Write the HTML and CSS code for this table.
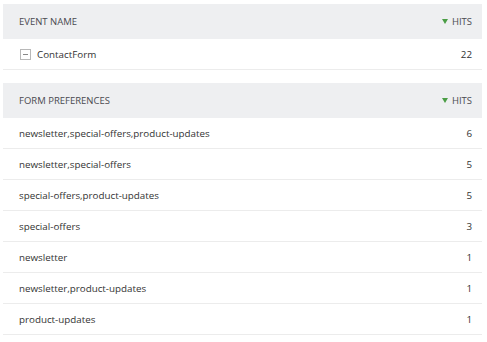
FILE: index.html
```html
<!DOCTYPE html>
<html lang="en">
<head>
  <meta charset="UTF-8">
  <title>Form preferences</title>
  <link rel="stylesheet" href="styles.css">
</head>
<body>
  <table class="report">
    <thead>
      <tr>
        <th class="label">Event name</th>
        <th class="hits"><span class="sort-arrow"></span>Hits</th>
      </tr>
    </thead>
    <tbody>
      <tr>
        <td class="label"><span class="toggle"></span>ContactForm</td>
        <td class="hits">22</td>
      </tr>
    </tbody>
  </table>

  <table class="report">
    <thead>
      <tr>
        <th class="label">Form preferences</th>
        <th class="hits"><span class="sort-arrow"></span>Hits</th>
      </tr>
    </thead>
    <tbody>
      <tr><td class="label">newsletter,special-offers,product-updates</td><td class="hits">6</td></tr>
      <tr><td class="label">newsletter,special-offers</td><td class="hits">5</td></tr>
      <tr><td class="label">special-offers,product-updates</td><td class="hits">5</td></tr>
      <tr><td class="label">special-offers</td><td class="hits">3</td></tr>
      <tr><td class="label">newsletter</td><td class="hits">1</td></tr>
      <tr><td class="label">newsletter,product-updates</td><td class="hits">1</td></tr>
      <tr><td class="label">product-updates</td><td class="hits">1</td></tr>
    </tbody>
  </table>
</body>
</html>
```

FILE: styles.css
```css
body {
  margin: 0;
  padding: 4px 5px 0 3px;
  font-family: "Open Sans", Arial, sans-serif;
  color: #333;
  background: #fff;
}

.report {
  width: 100%;
  border-collapse: collapse;
  margin-bottom: 13px;
}

.report th {
  height: 35px;
  padding: 0 10px 0 16px;
  background-color: #eeeff1;
  color: #4a4a50;
  font-size: 9.5px;
  font-weight: normal;
  text-transform: uppercase;
  text-align: left;
}

.report td {
  height: 30px;
  padding: 0 10px 0 16px;
  font-size: 9.8px;
  border-bottom: 1px solid #ececec;
}

.report .hits {
  text-align: right;
}

.sort-arrow {
  display: inline-block;
  width: 0;
  height: 0;
  margin-right: 4px;
  border-left: 3.5px solid transparent;
  border-right: 3.5px solid transparent;
  border-top: 5px solid #4a9d45;
  vertical-align: 1px;
}

.toggle {
  display: inline-block;
  box-sizing: border-box;
  width: 11px;
  height: 11px;
  margin: 0 6px 0 1px;
  border: 1px solid #b8b8b8;
  position: relative;
  vertical-align: -2px;
}

.toggle::after {
  content: "";
  position: absolute;
  left: 2px;
  right: 2px;
  top: 4px;
  height: 1px;
  background: #888;
}
```
